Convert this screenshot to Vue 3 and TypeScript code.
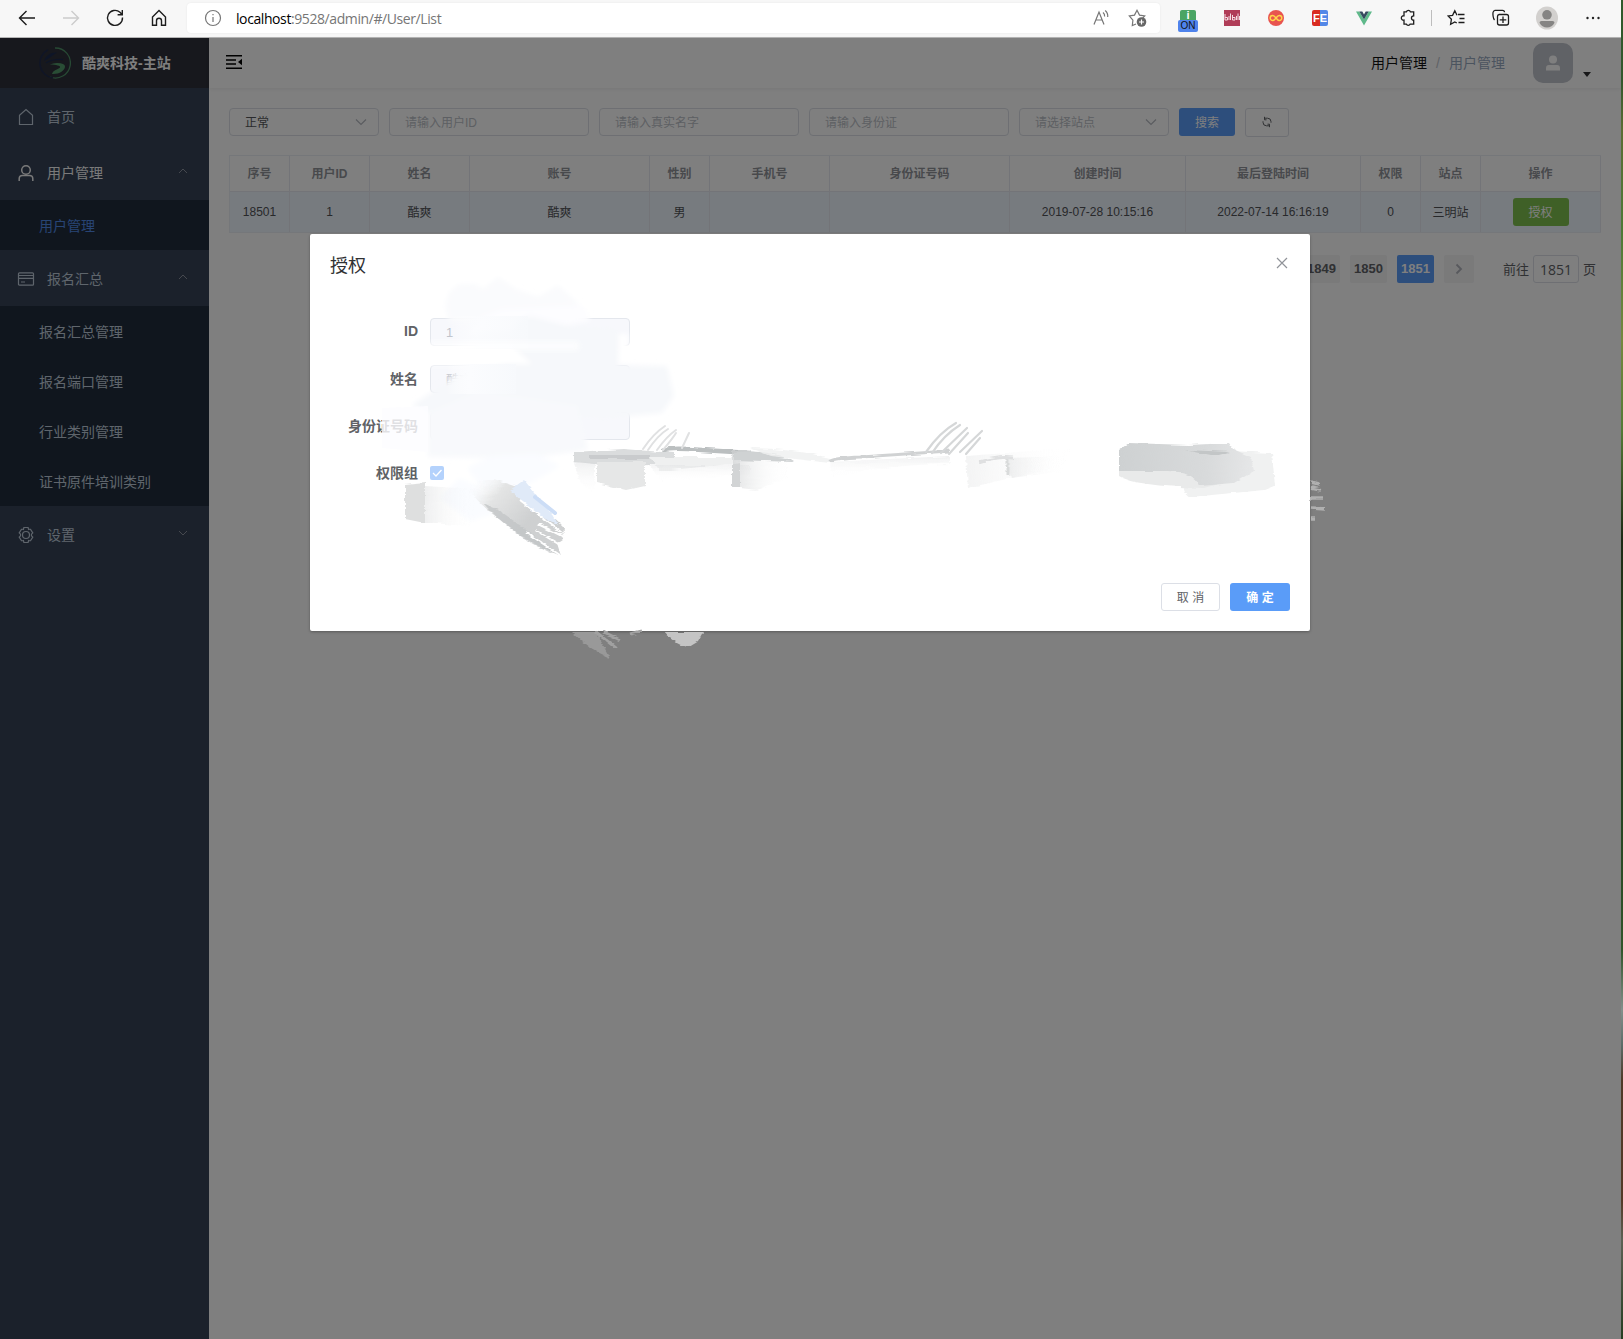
<script setup lang="ts">
interface MenuItem {
  title: string
  icon: string
  arrow?: 'up' | 'down'
  active?: boolean
  children?: { title: string; active?: boolean }[]
}

interface Column {
  label: string
  width: number
  value: string
}

const menu: MenuItem[] = [
  { title: '首页', icon: 'home' },
  { title: '用户管理', icon: 'user', arrow: 'up', active: true, children: [{ title: '用户管理', active: true }] },
  {
    title: '报名汇总',
    icon: 'card',
    arrow: 'up',
    children: [{ title: '报名汇总管理' }, { title: '报名端口管理' }, { title: '行业类别管理' }, { title: '证书原件培训类别' }],
  },
  { title: '设置', icon: 'gear', arrow: 'down' },
]

const columns: Column[] = [
  { label: '序号', width: 60, value: '18501' },
  { label: '用户ID', width: 80, value: '1' },
  { label: '姓名', width: 100, value: '酷爽' },
  { label: '账号', width: 180, value: '酷爽' },
  { label: '性别', width: 60, value: '男' },
  { label: '手机号', width: 120, value: '' },
  { label: '身份证号码', width: 180, value: '' },
  { label: '创建时间', width: 176, value: '2019-07-28 10:15:16' },
  { label: '最后登陆时间', width: 175, value: '2022-07-14 16:16:19' },
  { label: '权限', width: 60, value: '0' },
  { label: '站点', width: 60, value: '三明站' },
  { label: '操作', width: 120, value: '授权' },
]

const filters = [
  { text: '正常', select: true, filled: true },
  { text: '请输入用户ID' },
  { text: '请输入真实名字' },
  { text: '请输入身份证' },
  { text: '请选择站点', select: true },
]

const pages = ['1849', '1850', '1851']
</script>

<template>
  <div class="window">
    <header class="browser">
      <div class="nav-icons">
        <svg width="20" height="20" viewBox="0 0 20 20"><path d="M18 10H2.5M9.5 3L2.5 10l7 7" /></svg>
        <svg class="off" width="20" height="20" viewBox="0 0 20 20"><path d="M2 10h15.500M10.500 3l7 7-7 7" /></svg>
        <svg width="20" height="20" viewBox="0 0 20 20"><path d="M17.500 9.500a7.500 7.500 0 1 1-2.500-5.200L17 6.500M17.300 2v4.700h-4.700" /></svg>
        <svg width="20" height="20" viewBox="0 0 20 20"><path d="M3.500 9L10 2.600 16.500 9v8.200h-4v-4.400a2.500 2.500 0 0 0-5 0v4.400h-4z" /></svg>
      </div>
      <div class="address">
        <svg class="info" width="18" height="18" viewBox="0 0 18 18"><circle cx="9" cy="9" r="7.500" /><path d="M9 8v5M9 5v1.300" /></svg>
        <span class="url"><b>localhost</b>:9528/admin/#/User/List</span>
        <svg class="read" width="18" height="18" viewBox="0 0 18 18"><path d="M2 15.500L7 3 12 15.500M4 11h6M11 3.500c1.200 1 1.800 2.500 1.600 4M13.200 1.500c2 1.700 2.800 4 2.500 6.500" /></svg>
        <svg class="star" width="20" height="20" viewBox="0 0 20 20">
          <path d="M8 16l-3.700 1.600.6-5.400L1.300 8l5.200-.9L9 2.200l2.500 4.900 5.200.9-2 2" />
          <circle cx="13.500" cy="14" r="4.800" fill="#666" stroke="none" /><path d="M13.500 11.500v5M11 14h5" stroke="#fff" />
        </svg>
      </div>
      <div class="extensions">
        <div class="ext ext-on"><i>i</i><em>ON</em></div>
        <div class="ext ext-bili">
          <svg width="16" height="16" viewBox="0 0 16 16"><path d="M1 4v6h2.500V7.500H1M5 6v4M6.500 3.500V10M8.500 5v5H11V7.500H8.500M12.500 6v4M14 3.500V10M15.500 6v4" /></svg>
        </div>
        <div class="ext ext-inf">
          <svg width="16" height="16" viewBox="0 0 16 16"><path d="M8 8C6.500 6 5.800 5.500 4.700 5.500a2.500 2.500 0 0 0 0 5C5.800 10.500 6.500 10 8 8s2.200-2.500 3.300-2.500a2.500 2.500 0 0 1 0 5C10.200 10.500 9.500 10 8 8z" /></svg>
        </div>
        <div class="ext ext-fe">FE</div>
        <div class="ext">
          <svg width="16" height="16" viewBox="0 0 16 16"><path fill="#5fb98a" d="M0 1.500h3.300L8 9.500l4.700-8H16L8 15.500z" /><path fill="#35495e" d="M3.300 1.500h3L8 4.500l1.700-3h3L8 9.500z" /></svg>
        </div>
        <div class="ext"><svg width="20" height="20" viewBox="0 0 20 20"><path class="line" d="M6 3.800h2.400a2.100 2.100 0 0 1 4 0h3.300v4c-3 0-3 4.300 0 4.300v4h-3.500a2.100 2.100 0 0 1-3.900 0H6v-4a2.200 2.200 0 1 1 0-4.300z" /></svg></div>
        <div class="sep"></div>
        <div class="ext"><svg width="20" height="20" viewBox="0 0 20 20"><path class="line" d="M11 6.500h6.500M12.500 10.500h5M11.500 14.500h6M10 7.200L7.800 2.800 5.600 7.300l-4.500.6 3.300 3.400-.8 5L7.800 14l2 1" /></svg></div>
        <div class="ext"><svg width="20" height="20" viewBox="0 0 20 20"><path class="line" d="M3.500 12C2 10.500 1.800 6 2 4.500 2.200 3 3 2.500 4 2.300h7.500c1.300 0 2 .7 2 2M8 6.500h7.500a2 2 0 0 1 2 2V15a2 2 0 0 1-2 2H8.500a2 2 0 0 1-2-2V8.500a2 2 0 0 1 1.500-2M12 8.500v6.600M8.700 11.800h6.600" /></svg></div>
        <div class="ext profile"><svg width="22" height="24" viewBox="0 0 22 24"><ellipse cx="11" cy="12" rx="11" ry="11.500" fill="#d2d0ce" /><circle cx="11" cy="8.800" r="4.800" fill="#858483" /><path d="M3.500 16.800q0-1.800 2-1.800h11q2 0 2 1.800c-1.400 3.200-4.200 4.700-7.500 4.700s-6.100-1.500-7.500-4.700z" fill="#858483" /></svg></div>
        <div class="ext dots"><svg width="16" height="16" viewBox="0 0 16 16"><g fill="#222"><circle cx="2.500" cy="8" r="1.200" /><circle cx="8" cy="8" r="1.200" /><circle cx="13.500" cy="8" r="1.200" /></g></svg></div>
      </div>
    </header>

    <div class="app">
      <aside class="sidebar">
        <div class="brand">
          <svg width="32" height="32" viewBox="0 0 32 32">
            <path d="M16 1A15 15 0 1 1 11 30" fill="none" stroke="#4f9268" stroke-width="1.300" />
            <path d="M9 2.800A15 15 0 0 0 14 31" fill="none" stroke="#202b4c" stroke-width="1.600" />
            <path d="M5 14C7 8 12 5 18 5.500c-3 1.500-6 5-13 8.500z" fill="#1d2b4e" />
            <path d="M7 16q6-4 17-3.500" fill="none" stroke="#1d2b4e" stroke-width="1.300" />
            <path d="M11 17.500q3-1.500 7-1.500 8 0 8 3.500c0 4-6 8-13 7.500 1-4 6-4.500 8-6.500 1-2-4-2.600-10-3z" fill="#539a6b" />
          </svg>
          <strong>酷爽科技-主站</strong>
        </div>
        <template v-for="item in menu" :key="item.title">
          <div class="menu-item" :class="{ active: item.active }">
            <svg class="menu-icon" width="18" height="18" viewBox="0 0 18 18">
              <path v-if="item.icon === 'home'" d="M2.500 16.500V7.200L9 1.600l6.500 5.600v9.300z" />
              <g v-else-if="item.icon === 'user'" stroke-width="1.500"><circle cx="9" cy="6" r="4.300" /><path d="M2.200 17v-2.200c0-2 1.300-3.200 3.300-3.200h7c2 0 3.300 1.200 3.300 3.200V17" /></g>
              <path v-else-if="item.icon === 'card'" d="M2.500 2.800h13q1 0 1 1v10.400q0 1-1 1h-13q-1 0-1-1V3.800q0-1 1-1zM1.500 5.500h15M1.500 8.300h15M4 12h4" />
              <g v-else><circle cx="9" cy="9" r="3.500" /><path d="M6.900 1.500h4.200l.5 1.900q1.200-.3 2 0l2.200 3.400q-1.500 1.300-1.500 2.200t1.500 2.200l-2.200 3.400q-.8.300-2 0l-.5 1.900H6.900l-.5-1.900q-1.200.3-2 0l-2.200-3.400Q3.700 9.900 3.700 9T2.200 6.800l2.200-3.400q.8-.3 2 0z" /></g>
            </svg>
            <span>{{ item.title }}</span>
            <svg v-if="item.arrow" class="menu-arrow" width="10" height="10" viewBox="0 0 10 10">
              <path :d="item.arrow === 'up' ? 'M1 7l4-4 4 4' : 'M1 3l4 4 4-4'" />
            </svg>
          </div>
          <div v-for="child in item.children" :key="child.title" class="sub-item" :class="{ active: child.active }">{{ child.title }}</div>
        </template>
      </aside>

      <main class="main">
        <nav class="navbar">
          <svg class="fold" width="16" height="16" viewBox="0 0 16 16"><path d="M0 1.800h16M0 6h10M0 10h10M0 14.200h16" stroke="#000" stroke-width="1.600" /><path d="M16 4.700v6.600L12 8z" fill="#000" /></svg>
          <div class="crumbs"><span>用户管理</span><i>/</i><em>用户管理</em></div>
          <div class="avatar">
            <svg width="14" height="16" viewBox="0 0 14 16"><circle cx="7" cy="4.500" r="4" fill="#fff" /><path d="M0 15.500v-2.300Q0 10 3 10h8q3 0 3 3.200v2.300z" fill="#fff" /></svg>
          </div>
          <span class="caret"></span>
        </nav>

        <section class="content">
          <div class="filters">
            <div v-for="f in filters" :key="f.text" class="field" :class="{ select: f.select, filled: f.filled }">
              <span>{{ f.text }}</span>
              <svg v-if="f.select" width="12" height="12" viewBox="0 0 12 12"><path d="M1 3.500l5 5 5-5" /></svg>
            </div>
            <button class="btn primary">搜索</button>
            <button class="btn refresh">
              <svg width="12" height="12" viewBox="0 0 12 12"><path d="M3.500 2.200h3A3.500 3.500 0 0 1 10 5.700v1M3.500.8v3h2M8.500 9.800h-3A3.500 3.500 0 0 1 2 6.300v-1M8.500 11.200v-3h-2" /></svg>
            </button>
          </div>

          <div class="table">
            <div class="tr head">
              <div v-for="c in columns" :key="c.label" class="td" :style="{ width: c.width + 'px' }">{{ c.label }}</div>
            </div>
            <div class="tr body">
              <div v-for="c in columns" :key="c.label" class="td" :style="{ width: c.width + 'px' }">
                <button v-if="c.label === '操作'" class="btn success">{{ c.value }}</button>
                <template v-else>{{ c.value }}</template>
              </div>
            </div>
          </div>

          <div class="pager">
            <span v-for="p in pages" :key="p" class="page" :class="{ current: p === '1851' }">{{ p }}</span>
            <span class="page next"><svg width="8" height="12" viewBox="0 0 8 12"><path d="M1.500 1.500L6 6l-4.500 4.500" /></svg></span>
            <span class="jump">前往</span>
            <span class="jump-input">1851</span>
            <span class="jump">页</span>
          </div>
        </section>
      </main>
      <div class="mask"></div>
    </div>

    <div class="wallpaper"></div>

    <div class="dialog">
      <div class="dialog-head">
        <h3>授权</h3>
        <svg width="12" height="12" viewBox="0 0 12 12"><path d="M1 1l10 10M11 1L1 11" /></svg>
      </div>
      <div class="form">
        <div class="row"><label>ID</label><div class="input">1</div></div>
        <div class="row"><label>姓名</label><div class="input">酷爽</div></div>
        <div class="row"><label>身份证号码</label><div class="input"></div></div>
        <div class="row">
          <label>权限组</label>
          <span class="check"><svg width="14" height="14" viewBox="0 0 14 14"><path d="M3 7l3 3 5.500-6" /></svg></span>
        </div>
      </div>
      <div class="dialog-foot">
        <button class="btn cancel">取 消</button>
        <button class="btn confirm">确 定</button>
      </div>
    </div>

    <!-- brush marks painted over the dialog -->
    <svg class="brush" width="1623" height="700" viewBox="0 0 1623 700">
      <defs>
        <filter id="soft" x="-20%" y="-20%" width="140%" height="140%"><feGaussianBlur stdDeviation="2.500" /></filter>
        <filter id="rough" x="-10%" y="-20%" width="120%" height="140%">
          <feTurbulence type="fractalNoise" baseFrequency="0.05 0.4" numOctaves="2" seed="4" />
          <feDisplacementMap in="SourceGraphic" scale="4" xChannelSelector="R" yChannelSelector="G" result="d" />
          <feGaussianBlur in="d" stdDeviation="0.6" />
        </filter>
        <linearGradient id="fadeR"><stop offset="0" stop-color="#d0d2d3" /><stop offset="1" stop-color="#fff" stop-opacity="0" /></linearGradient>
        <linearGradient id="fadeD" x1="0" y1="0" x2="0" y2="1"><stop offset="0" stop-color="#d3d5d7" /><stop offset="1" stop-color="#fff" stop-opacity="0" /></linearGradient>
        <linearGradient id="pale"><stop offset="0" stop-color="#fff" stop-opacity="0" /><stop offset=".35" stop-color="#fbfcfe" /><stop offset="1" stop-color="#f7f9fc" /></linearGradient>
        <linearGradient id="hatch" gradientUnits="userSpaceOnUse" x1="470" y1="484" x2="520" y2="530"><stop offset="0" stop-color="#fff" stop-opacity="0" /><stop offset=".4" stop-color="#dfe0e0" /><stop offset="1" stop-color="#c6c8c9" /></linearGradient>
        <linearGradient id="grey"><stop offset="0" stop-color="#ced1d2" /><stop offset=".65" stop-color="#d8dadb" /><stop offset="1" stop-color="#e6e7e8" /></linearGradient>
      </defs>
      <g filter="url(#soft)">
        <path d="M445 306l4-14 10-8 16 0 8 5 15-12 18 12 22 8 20-12 20 18-4 18-125 0z" fill="#fafbfd" />
        <path d="M482 317l20-8 80-4 5 6 3 10-40 8-80 4z" fill="#fdfdff" />
        <path d="M428 349l60-5 100-10 40 0v16l-30 15-170 0z" fill="#fff" />
        <path d="M508 342l10-20 12-6 35 9 54 4-1 40-15 6-70-10z" fill="#f6f8fb" />
        <path d="M462 372l45-8 75 0 85 2 7 30-12 17-60 6-160 1-30-15z" fill="#f6f8fb" />
        <path d="M428 412l50-22 100 15 10 45-60 8-100-1z" fill="#f8f9fc" />
        <path d="M467 468l25-12 45-2 23 12-35 20-40 6z" fill="#fafcff" />
        <path d="M440 498l20-20 20 10 15 25-25 8z" fill="#fafcff" />
      </g>
      <path d="M446 364h70v30h-70z" fill="url(#pale)" />
      <path d="M450 316h78v33h-78z" fill="url(#pale)" opacity=".8" />
      <path d="M382 408l46-2v46l-46-4z" fill="#fdfdff" opacity=".82" />
      <path d="M429 341h150v10H429z" fill="#fff" opacity=".6" filter="url(#soft)" />
      <g filter="url(#rough)">
        <path d="M405 485l20-2v40l-20-4z" fill="#dedfdf" />
        <path d="M425 486l50 3v38l-50-5z" fill="url(#fadeR)" opacity=".35" />
        <path d="M464 484l30-5 30 10 40 38-1 12-6 4 4 13q-32-12-58-34-25-18-39-38z" fill="url(#hatch)" opacity=".85" />
        <path d="M483 503l16 7 57 42-6 1q-38-18-67-50z" fill="#c0c3c4" opacity=".7" />
        <path d="M510 490l14-10 30 36 4 9-25-13z" fill="#e0eaf8" />
        <path d="M538 524l28 14M535 530l30 18M527 533l33 22M520 500l46 36" stroke="#fff" stroke-width="2" fill="none" />
        <path d="M574 452l50-3 50 4v10l-50 4-50-5z" fill="#dadcdd" />
        <path d="M590 455h60v4h-60z" fill="#c9cbcd" />
        <path d="M573 460l22 3v32l-15-13z" fill="url(#fadeD)" opacity=".4" />
        <path d="M597 462h48v24l-18 4-30-7z" fill="#e6e7e7" />
        <path d="M650 457h90v6l-80 8z" fill="#eff0f0" />
        <path d="M650 465h100v10l-90 6z" fill="url(#fadeD)" opacity=".25" />
        <path d="M662 451q6-4 40-1l48 3" stroke="#bbbfc0" stroke-width="4.500" fill="none" />
        <path d="M732 451h20l35 10v17l-30 12-25-3z" fill="url(#fadeR)" opacity=".65" />
        <path d="M734 452q40-3 60 10l-60-2z" fill="#cfd2d3" />
        <path d="M732 464l8-1v24l-8 1z" fill="#d2d4d5" />
        <path d="M750 448q40 0 80 10v5l-60-7z" fill="#eff0f0" opacity=".8" />
        <path d="M830 461q6-3 30-4l90-6" stroke="#d0d2d3" stroke-width="3" fill="none" />
        <path d="M830 462l120-6v8q-60 0-118 13z" fill="url(#fadeD)" opacity=".35" />
        <path d="M966 456l105-8-8 18-95 22z" fill="url(#fadeR)" opacity=".25" />
        <path d="M1006 458l5 20 55-7v-15z" fill="url(#fadeR)" opacity=".35" />
        <path d="M1008 458v18" stroke="#d9dbdb" stroke-width="3" />
        <path d="M979 462q20-6 35-4" stroke="#dfe0e1" stroke-width="3" fill="none" />
        <path d="M1230 451l42 2 3 33-10 4-75 7q-12-8 0-17z" fill="#f0f1f1" />
        <path d="M1119 466h70l50 12-35 10q-70-2-85-12z" fill="#e9eaea" />
        <path d="M1119 450l10-7 60 2 40-2 4 6 18 8 3 14-20 12-35 3q-4-14-30-15l-50 0z" fill="url(#grey)" />
        <path d="M1185 450l45 2-15 4z" fill="#c3c6c7" />
      </g>
      <g fill="none" stroke-linecap="round" stroke="#e0e1e2">
        <path d="M643 449q10-15 22-23M648 450q10-15 20-21M657 450q10-14 19-20M663 450q10-12 13-17M682 448l7-15" stroke-width="2" />
        <path d="M926 452q14-20 30-29M932 453q12-18 28-28M941 453l26-25M949 454l19-21M960 452l22-21M966 454l14-16" stroke="#d5d7d8" stroke-width="2.200" />
        <path d="M535 497l20 16" stroke="#ccddf6" stroke-width="4" />
      </g>
      <g filter="url(#rough)">
        <path d="M665 632h38l-5 9-10 6q-14-2-23-15z" fill="#c4c4c4" />
        <path d="M572 632h24l14 26q-20-8-38-26z" fill="#999" />
        <path d="M596 632l20 16M604 632l16 8M630 634l12-3" stroke="#a1a1a1" stroke-width="3" />
        <path d="M1311 482l8 2M1311 488l10 2M1311 498l12 0M1311 508l14 1M1311 519h4" stroke="#b0b0b0" stroke-width="3.500" />
      </g>
    </svg>
  </div>
</template>

<style>
body {
  margin: 0;
  overflow: hidden;
}
</style>

<style scoped>
.window {
  position: relative;
  width: 1623px;
  height: 1339px;
  overflow: hidden;
  background: #fff;
  font-family: 'Liberation Sans', 'Noto Sans CJK SC', sans-serif;
  font-size: 14px;
}
.window * { box-sizing: border-box; }
svg { display: block; flex: none; }
i, em { font-style: normal; }
button { font-family: inherit; }

.browser {
  display: flex;
  align-items: flex-start;
  width: 1621px;
  height: 38px;
  background: #f7f7f7;
  border-bottom: 1px solid #b5b5b5;
}
.nav-icons { display: flex; flex: none; gap: 24px; width: 187px; padding: 8px 0 0 17px; }
.nav-icons svg { fill: none; stroke: #1d1d1d; stroke-width: 1.4; }
.nav-icons .off { stroke: #ccc; }
.address {
  display: flex;
  flex: none;
  align-items: center;
  width: 973px;
  height: 30px;
  margin-top: 3px;
  padding-left: 17px;
  background: #fff;
  border-radius: 4px;
  box-shadow: 0 0 2px rgba(0, 0, 0, 0.08);
}
.address svg { fill: none; stroke: #767676; stroke-width: 1.2; }
.url {
  margin: 0 auto 0 14px;
  color: #767676;
  font: 14px 'Open Sans', 'Noto Sans', sans-serif;
  letter-spacing: -0.41px;
}
.url b { color: #000; font-weight: 400; }
.read { margin-right: 18px; }
.star { margin-right: 12px; }
.extensions { display: flex; flex: none; height: 36px; padding-left: 6px; align-items: center; }
.ext { display: flex; flex: none; width: 44px; align-items: center; justify-content: center; }
.ext .line { fill: none; stroke: #1d1d1d; stroke-width: 1.3; }
.ext-on { flex-direction: column; align-self: flex-start; padding-top: 10px; }
.ext-on i { width: 16px; height: 10px; border-radius: 2px 2px 0 0; background: #4aa564; color: #fff; font: bold 11px/11px 'Liberation Sans', sans-serif; text-align: center; }
.ext-on em { width: 20px; height: 12px; border-radius: 2px; background: #4f83ec; color: #111; font: 10px/12px 'Liberation Sans', sans-serif; text-align: center; }
.ext-bili svg { background: #b03d58; fill: none; stroke: #f3dde2; stroke-width: 1; }
.ext-inf svg { border-radius: 8px; background: #e8544f; fill: none; stroke: #ffd54a; stroke-width: 1.5; }
.ext-fe { width: 16px; height: 16px; margin: 0 14px; border-radius: 2px; background: linear-gradient(90deg, #d92b21 50%, #5388e8 50%); color: #fff; font: bold 11px/16px 'Liberation Sans', sans-serif; }
.sep { width: 1px; height: 16px; margin: 0 3px 0 1px; background: #bdbdbd; }
.profile { margin-left: 2px; }
.dots { margin-left: 2px; }

.app { position: relative; display: flex; width: 1621px; height: 1301px; background: #fff; }
.mask { position: absolute; inset: 0; background: rgba(0, 0, 0, 0.5); }
.sidebar { width: 209px; height: 1301px; background: #364357; }
.brand { display: flex; align-items: center; height: 50px; padding-left: 39px; background: #2e303a; color: #fff; }
.brand strong { margin: -2px 0 0 11px; font-size: 14px; }
.menu-item { display: flex; align-items: center; height: 56px; padding: 0 21px 0 17px; color: #bfcbd9; }
.menu-item.active { color: #f4f4f5; }
.menu-item span { margin: 0 auto 0 12px; }
.menu-icon, .menu-arrow { fill: none; stroke: currentColor; stroke-width: 1.2; }
.menu-icon { margin-top: 2px; }
.menu-arrow { color: #8c939e; margin-top: -3px; stroke-width: 1; }
.sub-item { display: flex; align-items: center; height: 50px; padding-left: 39px; background: #202d3c; color: #bfcbd9; }
.sub-item.active { color: #5089e8; }

.main { width: 1412px; }
.navbar { display: flex; align-items: center; height: 50px; padding-left: 17px; box-shadow: 0 1px 4px rgba(0, 21, 41, 0.08); }
.fold { margin-top: -2px; }
.crumbs { display: flex; align-items: center; margin: -2px 0 0 auto; }
.crumbs span { color: #111; }
.crumbs i { width: 22px; padding-top: 2px; text-align: center; color: #c0c4cc; }
.crumbs em { color: #97a8be; }
.avatar { display: flex; align-items: center; justify-content: center; width: 40px; height: 40px; margin-left: 28px; border-radius: 10px; background: #c0c4cc; }
.caret { margin: 22px 30px 0 10px; border: 4px solid transparent; border-top: 5px solid #303133; border-bottom: 0; }

.content { padding: 20px 20px 0; }
.filters { display: flex; gap: 10px; height: 47px; }
.field { display: flex; align-items: center; justify-content: space-between; width: 200px; height: 28px; padding: 0 11px 0 15px; border: 1px solid #dcdfe6; border-radius: 4px; color: #bbbec6; font-size: 12px; }
.field.select { width: 150px; }
.field.filled { color: #55575b; }
.field span { margin-top: -1px; }
.field svg { fill: none; stroke: #b5b8c0; stroke-width: 1.2; }
.btn { display: flex; align-items: center; justify-content: center; height: 28px; padding: 0 0 1px; border: 0; border-radius: 3px; color: #fff; font-size: 12px; }
.btn.primary { width: 56px; background: #5a9cf8; }
.btn.refresh { width: 44px; height: 29px; background: transparent; border: 1px solid #dcdfe6; }
.btn.refresh svg { fill: none; stroke: #606266; stroke-width: 1; }
.btn.success { width: 56px; background: #7fc14f; }

.table { width: 1372px; border: 1px solid #ebeef5; border-right-width: 0; color: #606266; font-size: 12px; }
.tr { display: flex; }
.td { display: flex; flex: none; align-items: center; justify-content: center; height: 100%; border-right: 1px solid #e6e9f0; }
.head { height: 36px; border-bottom: 1px solid #e6e9f0; color: #909399; font-weight: 700; }
.head .td { padding-bottom: 2px; }
.body { height: 40px; background: #eff6ff; color: #505256; }
.body .td { padding-bottom: 1px; }

.pager { display: flex; justify-content: flex-end; align-items: center; height: 28px; margin-top: 22px; padding-right: 5px; color: #606266; font-size: 13px; }
.page { width: 37px; height: 28px; margin-right: 10px; border-radius: 2px; background: #f4f4f5; color: #606266; font-weight: 700; line-height: 27px; text-align: center; }
.page.current { background: #5a9cf8; color: #fff; }
.page.next { display: flex; align-items: center; justify-content: center; width: 30px; margin-right: 29px; }
.next svg { fill: none; stroke: #b0b3ba; stroke-width: 1.8; }
.jump { line-height: 28px; padding-top: 1px; }
.jump-input { width: 46px; height: 28px; margin: 0 4px; border: 1px solid #dcdfe6; border-radius: 3px; font: 14px/27px 'Open Sans', sans-serif; text-align: center; }

.wallpaper {
  position: absolute;
  top: 0;
  right: 0;
  width: 2px;
  height: 1339px;
  background: linear-gradient(#2f5a2c 0, #32572c 80px, #5b6d34 130px, #4d7936 230px, #74883f 340px, #537a36 430px, #1c2914 540px, #28441f 640px, #203b1d 720px, #31552a 950px, #83908b 1010px, #5b6c67 1045px, #4e3a27 1080px, #533a27 1200px, #5c6154 1240px, #263d21 1339px);
}

.dialog {
  position: absolute;
  top: 234px;
  left: 310px;
  display: flex;
  flex-direction: column;
  width: 1000px;
  height: 397px;
  border-radius: 2px;
  background: #fff;
  box-shadow: 0 1px 3px rgba(0, 0, 0, 0.3);
}
.dialog-head { display: flex; justify-content: space-between; padding: 20px 22px 0 20px; }
.dialog-head h3 { margin: 0; color: #303133; font-size: 18px; font-weight: 400; line-height: 24px; }
.dialog-head svg { margin-top: 3px; fill: none; stroke: #909399; stroke-width: 1.2; }
.form { display: flex; flex-direction: column; gap: 19px; padding-top: 40px; }
.row { display: flex; align-items: center; height: 28px; }
.row label { width: 108px; margin: -2px 12px 0 0; color: #606266; font-weight: 700; text-align: right; }
.input { width: 200px; height: 28px; padding-left: 15px; border: 1px solid #e4e7ed; border-radius: 4px; background: #f7f8fc; color: #c0c4cc; font-size: 13px; line-height: 27px; }
.check { width: 14px; height: 14px; border-radius: 2px; background: #b4d2fc; }
.check svg { fill: none; stroke: #fff; stroke-width: 1.3; }
.dialog-foot { display: flex; justify-content: flex-end; gap: 10px; margin-top: auto; padding: 0 20px 20px; }
.cancel { width: 59px; border: 1px solid #dcdfe6; background: #fff; color: #606266; }
.confirm { width: 60px; background: #5a9cf8; font-weight: 700; }

.brush { position: absolute; top: 0; left: 0; pointer-events: none; }
</style>
